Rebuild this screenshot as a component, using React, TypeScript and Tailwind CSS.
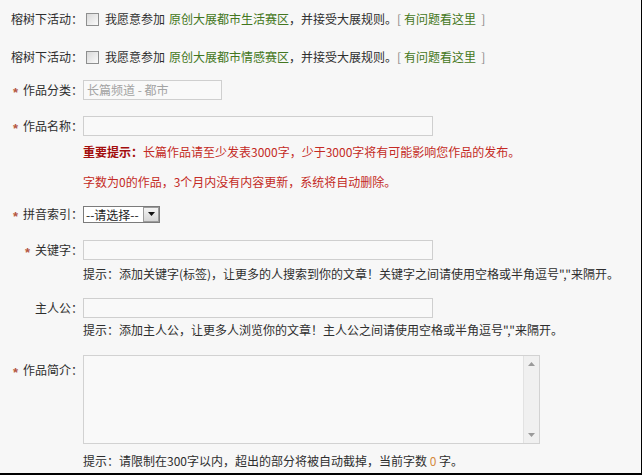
import type { ReactNode } from 'react';

const green = 'text-[#437620]';

function FieldLabel({ children, required }: { children: ReactNode; required?: boolean }) {
  return (
    <div className="w-[83px] shrink-0 flex items-center justify-end whitespace-nowrap">
      {required && (
        <span className="mr-[5px] text-[13px] leading-none font-bold text-[#b4563f] font-['Liberation_Sans',sans-serif] translate-y-[2px]">
          *
        </span>
      )}
      <span>{children}</span>
    </div>
  );
}

function Checkbox() {
  return (
    <span className="ml-[3px] mr-[6px] inline-block w-[13px] h-[13px] shrink-0 border border-[#8e8f8f] bg-linear-to-br from-[#d9d9d9] to-[#fbfbfb]" />
  );
}

function ActivityRow({ zone }: { zone: string }) {
  return (
    <div className="h-[38px] flex items-center">
      <FieldLabel>榕树下活动：</FieldLabel>
      <Checkbox />
      <span>我愿意参加</span>
      <span className={`ml-[4px] ${green}`}>{zone}</span>
      <span>，并接受大展规则。</span>
      <span className="text-[#888]">[</span>
      <span className={`ml-[3px] ${green}`}>有问题看这里</span>
      <span className="ml-[5px] text-[#888]">]</span>
    </div>
  );
}

function Triangle({ up }: { up?: boolean }) {
  return (
    <svg width="7" height="4" viewBox="0 0 7 4">
      <path d={up ? 'M0 4 L3.5 0 L7 4 Z' : 'M0 0 L3.5 4 L7 0 Z'} fill="#9a9a9a" />
    </svg>
  );
}

export default function App() {
  return (
    <div className="w-[642px] h-[475px] overflow-hidden bg-[#f7f7f7] border-r border-b-2 border-black text-[12px] leading-[20px] text-[#2e2e2e] font-['Noto_Sans_CJK_SC','Noto_Sans',sans-serif]">
      <ActivityRow zone="原创大展都市生活赛区" />
      <ActivityRow zone="原创大展都市情感赛区" />

      <div className="mt-[4px] h-[20px] flex items-center">
        <FieldLabel required>作品分类：</FieldLabel>
        <div className="w-[139px] h-[20px] border border-[#cfcfcf] bg-[#f9f9f9] px-[3px] text-[#a3a3a3] leading-[18px]">
          长篇频道 - 都市
        </div>
      </div>

      <div className="mt-[16px] h-[20px] flex items-center">
        <FieldLabel required>作品名称：</FieldLabel>
        <input className="w-[350px] h-[20px] border border-[#cfcfcf] bg-[#f9f9f9] px-[3px] outline-none" />
      </div>

      <div className="mt-[6px] pl-[83px] text-[#c42a24]">
        <span className="font-bold text-[#a30d0d]">重要提示：</span>
        长篇作品请至少发表3000字，少于3000字将有可能影响您作品的发布。
      </div>
      <div className="mt-[10px] pl-[83px] text-[#c42a24]">
        字数为0的作品，3个月内没有内容更新，系统将自动删除。
      </div>

      <div className="mt-[12px] h-[20px] flex items-center">
        <FieldLabel required>拼音索引：</FieldLabel>
        <div className="w-[77px] h-[17px] flex items-stretch border border-[#7b7b7b] bg-white">
          <span className="flex-1 px-[2px] leading-[15px] text-[#222]">--请选择--</span>
          <span className="w-[16px] flex items-center justify-center border border-[#9c9c9c] bg-linear-to-b from-[#f4f4f4] to-[#d6d6d6]">
            <svg width="7" height="4" viewBox="0 0 7 4">
              <path d="M0 0 L3.5 4 L7 0 Z" fill="#111" />
            </svg>
          </span>
        </div>
      </div>

      <div className="mt-[16px] h-[20px] flex items-center">
        <FieldLabel required>关键字：</FieldLabel>
        <input className="w-[350px] h-[20px] border border-[#cfcfcf] bg-[#f9f9f9] px-[3px] outline-none" />
      </div>
      <div className="mt-[4px] pl-[83px] whitespace-nowrap">
        {'提示：添加关键字(标签)，让更多的人搜索到你的文章！关键字之间请使用空格或半角逗号","来隔开。'}
      </div>

      <div className="mt-[14px] h-[20px] flex items-center">
        <FieldLabel>主人公：</FieldLabel>
        <input className="w-[350px] h-[20px] border border-[#cfcfcf] bg-[#f9f9f9] px-[3px] outline-none" />
      </div>
      <div className="mt-[2px] pl-[83px] whitespace-nowrap">
        {'提示：添加主人公，让更多人浏览你的文章！主人公之间请使用空格或半角逗号","来隔开。'}
      </div>

      <div className="mt-[15px] flex items-start">
        <div className="pt-[5px]">
          <FieldLabel required>作品简介：</FieldLabel>
        </div>
        <div className="w-[457px] h-[89px] flex border border-[#d2d2d2] bg-[#f9f9f9]">
          <textarea className="flex-1 resize-none bg-transparent outline-none p-[3px]" />
          <div className="w-[16px] flex flex-col items-center justify-between py-[6px] border-l border-[#e2e2e2] bg-[#f0f0f0]">
            <Triangle up />
            <Triangle />
          </div>
        </div>
      </div>
      <div className="mt-[7px] pl-[83px] whitespace-nowrap">
        提示：请限制在300字以内，超出的部分将被自动截掉，当前字数 <span className="text-[#d58a3d]">0</span> 字。
      </div>
    </div>
  );
}
